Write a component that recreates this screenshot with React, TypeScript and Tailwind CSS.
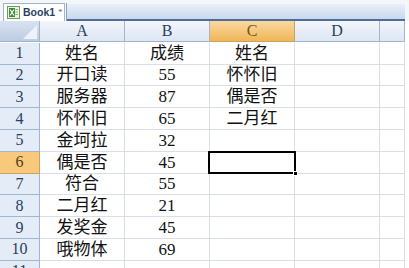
import React from 'react';

const cols = ['A', 'B', 'C', 'D', ''];

const rows: string[][] = [
  ['姓名', '成绩', '姓名', '', ''],
  ['开口读', '55', '怀怀旧', '', ''],
  ['服务器', '87', '偶是否', '', ''],
  ['怀怀旧', '65', '二月红', '', ''],
  ['金坷拉', '32', '', '', ''],
  ['偶是否', '45', '', '', ''],
  ['符合', '55', '', '', ''],
  ['二月红', '21', '', '', ''],
  ['发奖金', '45', '', '', ''],
  ['哦物体', '69', '', '', ''],
  ['', '', '', '', ''],
];

const cellFont = { fontFamily: '"Liberation Serif", "Noto Sans CJK SC", serif' };

const ExcelIcon = () => (
  <svg width="13" height="13" viewBox="0 0 13 13" className="shrink-0">
    <rect x="0.5" y="0.5" width="12" height="12" fill="#e8f3e4" stroke="#6f9a5f" />
    <rect x="2" y="2" width="6" height="9" fill="#3f8a3a" />
    <path d="M3 3.5 L7 9.5 M7 3.5 L3 9.5" stroke="#fff" strokeWidth="1.2" />
    <path d="M8.5 3.5 H11 M8.5 6 H11 M8.5 8.5 H11" stroke="#6f9a5f" strokeWidth="0.8" />
  </svg>
);

export default function App() {
  return (
    <div className="w-[409px] h-[268px] bg-white overflow-hidden" style={cellFont}>
      {/* tab bar */}
      <div className="h-[21px] flex items-end bg-[#f4f6f9]">
        <div className="ml-[3px] h-[18px] w-[62px] shrink-0 flex items-center gap-[3px] pl-[3px] bg-white border border-b-0 border-[#9fb3cc] whitespace-nowrap">
          <ExcelIcon />
          <span
            className="text-[10.5px] font-bold text-[#2b3f5e] leading-none"
            style={{ fontFamily: '"Liberation Sans", sans-serif' }}
          >
            Book1
          </span>
          <span className="text-[9px] text-[#5b6b80] leading-none">*</span>
        </div>
        <div className="w-[1px] h-[18px] bg-[#8aa2c0] ml-[1px] shrink-0" />
        <div className="h-[17px] flex-1 mr-[4px] bg-gradient-to-b from-[#e8eff8] to-[#c9d9ee] border-b-2 border-[#4e6d99]" />
      </div>

      {/* grid */}
      <div className="grid w-[405px] grid-cols-[40px_85px_85px_85px_85px_25px] auto-rows-[21.8px] relative">
        {/* corner */}
        <div className="h-[21px] bg-gradient-to-b from-[#d9e3f1] to-[#bccce2] border-r border-b border-[#9eb6ce] relative overflow-hidden">
          <svg className="absolute right-[2px] bottom-[2px]" width="14" height="14" viewBox="0 0 14 14">
            <polygon points="14,0 14,14 0,14" fill="#eef3fa" />
          </svg>
        </div>
        {cols.map((c, i) => (
          <div
            key={'h' + i}
            className={
              'h-[21px] flex items-center justify-center text-[16px] border-r border-b ' +
              (c === 'C'
                ? 'bg-gradient-to-b from-[#f9d99f] to-[#f1b555] border-[#c9a55c] text-[#6b5523]'
                : 'bg-gradient-to-b from-[#f3f6fb] to-[#dde6f2] border-[#9eb6ce] text-[#27415f]')
            }
          >
            {c}
          </div>
        ))}

        {rows.map((r, ri) => (
          <React.Fragment key={ri}>
            <div
              className={
                'flex items-center justify-center text-[16px] border-r border-b ' +
                (ri === 5
                  ? 'bg-[#f8c97a] border-[#c9a55c] text-[#4b3d1c]'
                  : 'bg-[#e4ecf7] border-[#9eb6ce] text-[#27415f]')
              }
            >
              {ri + 1}
            </div>
            {r.map((v, ci) => (
              <div
                key={ci}
                className="flex items-center justify-center text-[17px] text-[#111] border-r border-b border-[#dadfe6] leading-none"
              >
                {v}
              </div>
            ))}
          </React.Fragment>
        ))}

        {/* selected cell C6 */}
        <div className="absolute left-[208px] top-[130px] w-[88px] h-[23px] border-2 border-black pointer-events-none">
          <div className="absolute -right-[4px] -bottom-[4px] w-[5px] h-[5px] bg-black border border-white" />
        </div>
      </div>
    </div>
  );
}
